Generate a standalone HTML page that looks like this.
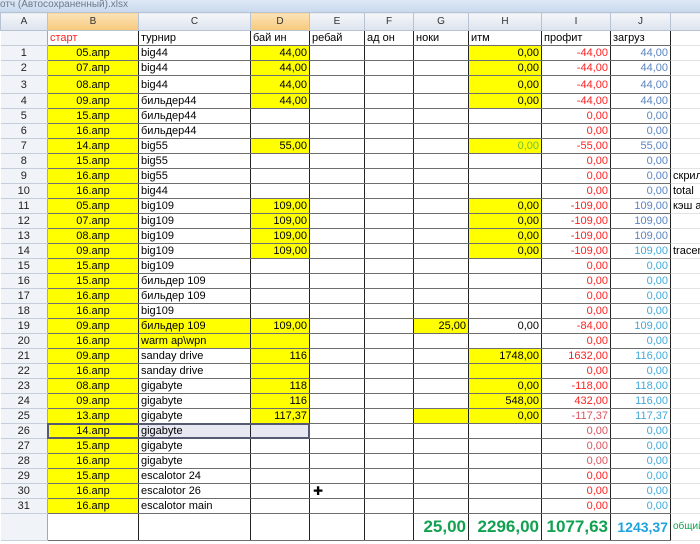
<!DOCTYPE html>
<html><head><meta charset="utf-8"><style>
*{margin:0;padding:0;box-sizing:border-box}
body{width:700px;height:544px;overflow:hidden;background:#fff;font-family:"Liberation Sans","DejaVu Sans",sans-serif;font-size:11px;position:relative}
#title{position:absolute;left:0;top:0;width:700px;height:12px;background:linear-gradient(#dfe9f5,#c9d9ee);color:#6a7a8c;font-size:10px;line-height:10px;padding-left:0}
table{position:absolute;left:0;top:12px;width:700px;border-collapse:collapse;table-layout:fixed}
td{height:15px;line-height:14px;padding:0 2px;white-space:nowrap;overflow:hidden;border-bottom:1px solid #6e6e6e;border-right:1px solid #222}
tr.hd td{height:18px;background:linear-gradient(#f4f6f9,#dde4ee);border:1px solid #b7c3d3;text-align:center;color:#333;font-size:10px}
tr.hd td.sel{background:linear-gradient(#fbe3b9,#f7c97a)}
td.rh{background:#f0f3f7;border-right:1px solid #9aa9bd;border-bottom:1px solid #c6ced9;text-align:center;color:#222}
td.k{border-right:none;border-bottom:1px solid #e3e3e3;overflow:visible}
.y{background:#ffff00}
.r{text-align:right}
.c{text-align:center}
.red{color:#ff2020;text-align:right}
.pr{color:#d9545e;text-align:right}
.bl{color:#5a84c0;text-align:right}
.lb{color:#43a9d8;text-align:right}
.sel2{background:#e8e8f2}
tr.tot td{height:26px;font-size:17px;font-weight:bold;color:#12a150;text-align:right;line-height:26px}
</style></head><body>
<div id="title">отч (Автосохраненный).xlsx</div>
<table>
<colgroup><col style="width:47px"><col style="width:91px"><col style="width:112px"><col style="width:59px"><col style="width:55px"><col style="width:49px"><col style="width:55px"><col style="width:73px"><col style="width:69px"><col style="width:60px"><col style="width:30px"></colgroup>
<tr class="hd"><td>A</td><td class="sel">B</td><td>C</td><td class="sel">D</td><td>E</td><td>F</td><td>G</td><td>H</td><td>I</td><td>J</td><td></td></tr>
<tr><td class="rh"></td><td style="color:#ff2020">старт</td><td>турнир</td><td>бай ин</td><td>ребай</td><td>ад он</td><td>ноки</td><td>итм</td><td>профит</td><td>загруз</td><td class="k"></td></tr>
<tr><td class="rh">1</td><td class="y c">05.апр</td><td>big44</td><td class="y r">44,00</td><td></td><td></td><td></td><td class="y r">0,00</td><td class="red">-44,00</td><td class="bl">44,00</td><td class="k"></td></tr>
<tr><td class="rh">2</td><td class="y c">07.апр</td><td>big44</td><td class="y r">44,00</td><td></td><td></td><td></td><td class="y r">0,00</td><td class="red">-44,00</td><td class="bl">44,00</td><td class="k"></td></tr>
<tr style="height:18px"><td class="rh" style="height:18px">3</td><td class="y c">08.апр</td><td>big44</td><td class="y r">44,00</td><td></td><td></td><td></td><td class="y r">0,00</td><td class="red">-44,00</td><td class="bl">44,00</td><td class="k"></td></tr>
<tr><td class="rh">4</td><td class="y c">09.апр</td><td>бильдер44</td><td class="y r">44,00</td><td></td><td></td><td></td><td class="y r">0,00</td><td class="red">-44,00</td><td class="bl">44,00</td><td class="k"></td></tr>
<tr><td class="rh">5</td><td class="y c">15.апр</td><td>бильдер44</td><td></td><td></td><td></td><td></td><td></td><td class="red">0,00</td><td class="bl">0,00</td><td class="k"></td></tr>
<tr><td class="rh">6</td><td class="y c">16.апр</td><td>бильдер44</td><td></td><td></td><td></td><td></td><td></td><td class="red">0,00</td><td class="bl">0,00</td><td class="k"></td></tr>
<tr><td class="rh">7</td><td class="y c">14.апр</td><td>big55</td><td class="y r">55,00</td><td></td><td></td><td></td><td class="y r" style="color:#6cbf3a">0,00</td><td class="red">-55,00</td><td class="bl">55,00</td><td class="k"></td></tr>
<tr><td class="rh">8</td><td class="y c">15.апр</td><td>big55</td><td></td><td></td><td></td><td></td><td></td><td class="red">0,00</td><td class="bl">0,00</td><td class="k"></td></tr>
<tr><td class="rh">9</td><td class="y c">16.апр</td><td>big55</td><td></td><td></td><td></td><td></td><td></td><td class="red">0,00</td><td class="bl">0,00</td><td class="k">скрил</td></tr>
<tr><td class="rh">10</td><td class="y c">16.апр</td><td>big44</td><td></td><td></td><td></td><td></td><td></td><td class="red">0,00</td><td class="bl">0,00</td><td class="k">total</td></tr>
<tr><td class="rh">11</td><td class="y c">05.апр</td><td>big109</td><td class="y r">109,00</td><td></td><td></td><td></td><td class="y r">0,00</td><td class="red">-109,00</td><td class="bl">109,00</td><td class="k">кэш ау</td></tr>
<tr><td class="rh">12</td><td class="y c">07.апр</td><td>big109</td><td class="y r">109,00</td><td></td><td></td><td></td><td class="y r">0,00</td><td class="red">-109,00</td><td class="bl">109,00</td><td class="k"></td></tr>
<tr><td class="rh">13</td><td class="y c">08.апр</td><td>big109</td><td class="y r">109,00</td><td></td><td></td><td></td><td class="y r">0,00</td><td class="red">-109,00</td><td class="bl">109,00</td><td class="k"></td></tr>
<tr><td class="rh">14</td><td class="y c">09.апр</td><td>big109</td><td class="y r">109,00</td><td></td><td></td><td></td><td class="y r">0,00</td><td class="red">-109,00</td><td class="lb">109,00</td><td class="k">tracer</td></tr>
<tr><td class="rh">15</td><td class="y c">15.апр</td><td>big109</td><td></td><td></td><td></td><td></td><td></td><td class="red">0,00</td><td class="lb">0,00</td><td class="k"></td></tr>
<tr><td class="rh">16</td><td class="y c">15.апр</td><td>бильдер 109</td><td></td><td></td><td></td><td></td><td></td><td class="red">0,00</td><td class="lb">0,00</td><td class="k"></td></tr>
<tr><td class="rh">17</td><td class="y c">16.апр</td><td>бильдер 109</td><td></td><td></td><td></td><td></td><td></td><td class="red">0,00</td><td class="lb">0,00</td><td class="k"></td></tr>
<tr><td class="rh">18</td><td class="y c">16.апр</td><td>big109</td><td></td><td></td><td></td><td></td><td></td><td class="red">0,00</td><td class="lb">0,00</td><td class="k"></td></tr>
<tr><td class="rh">19</td><td class="y c">09.апр</td><td class="y">бильдер 109</td><td class="y r">109,00</td><td></td><td></td><td class="y r">25,00</td><td class="r">0,00</td><td class="red">-84,00</td><td class="lb">109,00</td><td class="k"></td></tr>
<tr><td class="rh">20</td><td class="y c">16.апр</td><td class="y">warm ap\wpn</td><td class="y"></td><td></td><td></td><td></td><td></td><td class="red">0,00</td><td class="lb">0,00</td><td class="k"></td></tr>
<tr><td class="rh">21</td><td class="y c">09.апр</td><td>sanday drive</td><td class="y r">116</td><td></td><td></td><td></td><td class="y r">1748,00</td><td class="red">1632,00</td><td class="lb">116,00</td><td class="k"></td></tr>
<tr><td class="rh">22</td><td class="y c">16.апр</td><td>sanday drive</td><td class="y"></td><td></td><td></td><td></td><td class="y"></td><td class="red">0,00</td><td class="lb">0,00</td><td class="k"></td></tr>
<tr><td class="rh">23</td><td class="y c">08.апр</td><td>gigabyte</td><td class="y r">118</td><td></td><td></td><td></td><td class="y r">0,00</td><td class="red">-118,00</td><td class="lb">118,00</td><td class="k"></td></tr>
<tr><td class="rh">24</td><td class="y c">09.апр</td><td>gigabyte</td><td class="y r">116</td><td></td><td></td><td></td><td class="y r">548,00</td><td class="red">432,00</td><td class="lb">116,00</td><td class="k"></td></tr>
<tr><td class="rh">25</td><td class="y c">13.апр</td><td>gigabyte</td><td class="y r">117,37</td><td></td><td></td><td class="y"></td><td class="y r">0,00</td><td class="pr">-117,37</td><td class="lb">117,37</td><td class="k"></td></tr>
<tr><td class="rh">26</td><td class="y c">14.апр</td><td class="sel2">gigabyte</td><td class="sel2">&nbsp;</td><td></td><td></td><td></td><td></td><td class="pr">0,00</td><td class="lb">0,00</td><td class="k"></td></tr>
<tr><td class="rh">27</td><td class="y c">15.апр</td><td>gigabyte</td><td></td><td></td><td></td><td></td><td></td><td class="pr">0,00</td><td class="lb">0,00</td><td class="k"></td></tr>
<tr><td class="rh">28</td><td class="y c">16.апр</td><td>gigabyte</td><td></td><td></td><td></td><td></td><td></td><td class="pr">0,00</td><td class="lb">0,00</td><td class="k"></td></tr>
<tr><td class="rh">29</td><td class="y c">15.апр</td><td>escalotor 24</td><td></td><td></td><td></td><td></td><td></td><td class="red">0,00</td><td class="lb">0,00</td><td class="k"></td></tr>
<tr><td class="rh">30</td><td class="y c">16.апр</td><td>escalotor 26</td><td></td><td></td><td></td><td></td><td></td><td class="red">0,00</td><td class="lb">0,00</td><td class="k"></td></tr>
<tr><td class="rh">31</td><td class="y c">16.апр</td><td>escalotor main</td><td></td><td></td><td></td><td></td><td></td><td class="red">0,00</td><td class="lb">0,00</td><td class="k"></td></tr>
<tr class="tot"><td class="rh"></td><td></td><td></td><td></td><td></td><td></td><td>25,00</td><td>2296,00</td><td>1077,63</td><td style="color:#1fa3e0;font-size:14px">1243,37</td><td class="k" style="font-size:10px;font-weight:normal;text-align:left;color:#12a150">общий</td></tr>
</table>
<div style="position:absolute;left:47px;top:423px;width:263px;height:16px;border:2px solid #555a70"></div>
<div style="position:absolute;left:313px;top:484px;font-size:12px;color:#000">✚</div>
</body></html>
